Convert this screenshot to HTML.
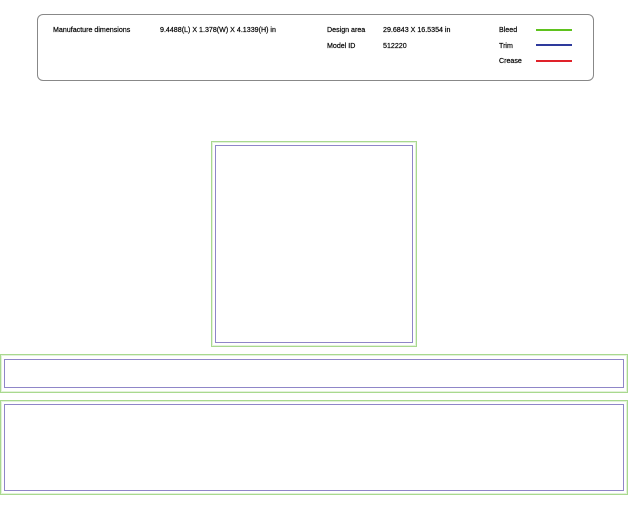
<!DOCTYPE html>
<html><head><meta charset="utf-8"><style>
body{margin:0;width:628px;height:526px;background:#fff;position:relative;overflow:hidden;font-family:"Liberation Sans",Arial,sans-serif;font-size:7.1px;color:#000;-webkit-text-stroke:0.2px #000}
.a{position:absolute}
.box{position:absolute;left:37px;top:14px;width:557px;height:67px;border:1px solid #888;border-radius:6px;box-sizing:border-box}
.b{position:absolute;border:1px solid #a9d98f;box-sizing:border-box;box-shadow:inset 0 0 0 1px #e3f2da}
.t{position:absolute;border:1px solid #8f86c8;box-sizing:border-box}
.l{position:absolute;height:2px;width:36px}
</style></head><body>
<div class="box"></div>
<div class="a" style="left:53px;top:26px">Manufacture dimensions</div>
<div class="a" style="left:160px;top:26px">9.4488(L) X 1.378(W) X 4.1339(H) in</div>
<div class="a" style="left:327px;top:26px">Design area</div>
<div class="a" style="left:383px;top:26px">29.6843 X 16.5354 in</div>
<div class="a" style="left:327px;top:42px">Model ID</div>
<div class="a" style="left:383px;top:42px">512220</div>
<div class="a" style="left:499px;top:26px">Bleed</div>
<div class="a" style="left:499px;top:42px">Trim</div>
<div class="a" style="left:499px;top:57px">Crease</div>
<div class="l" style="left:536px;top:29px;background:#5fc21e"></div>
<div class="l" style="left:536px;top:44px;background:#2e3a9c"></div>
<div class="l" style="left:536px;top:60px;background:#e0222a"></div>

<div class="b" style="left:211px;top:141px;width:206px;height:206px"></div>
<div class="t" style="left:215px;top:145px;width:198px;height:198px"></div>

<div class="b" style="left:0;top:354px;width:628px;height:39px"></div>
<div class="t" style="left:4px;top:359px;width:620px;height:29px"></div>

<div class="b" style="left:0;top:400px;width:628px;height:95px"></div>
<div class="t" style="left:4px;top:404px;width:620px;height:87px"></div>
</body></html>
